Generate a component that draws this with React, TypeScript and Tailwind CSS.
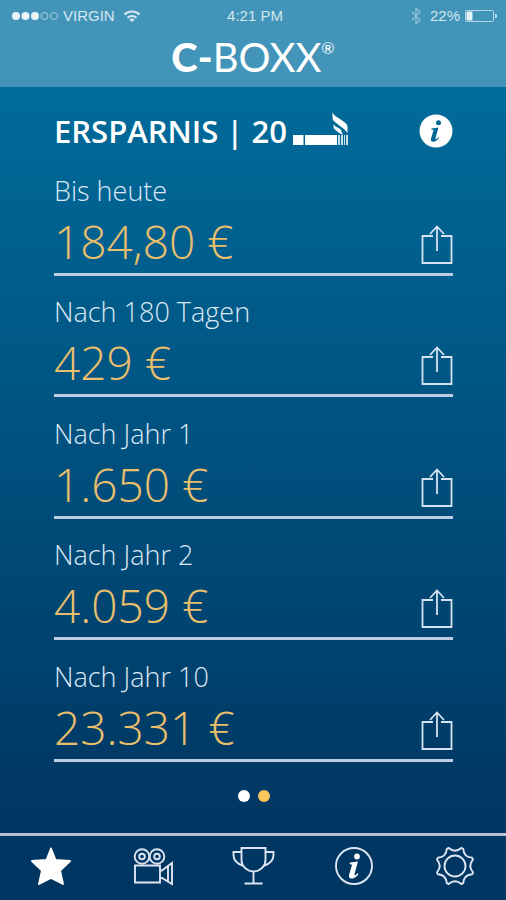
import type { ReactNode } from "react";

const savings = [
  { label: "Bis heute", amount: "184,80 €" },
  { label: "Nach 180 Tagen", amount: "429 €" },
  { label: "Nach Jahr 1", amount: "1.650 €" },
  { label: "Nach Jahr 2", amount: "4.059 €" },
  { label: "Nach Jahr 10", amount: "23.331 €" },
];

function StatusBar() {
  return (
    <div className="grid h-8 grid-cols-3 items-center pr-2 pl-3 font-['Liberation_Sans',sans-serif] text-[15px] text-[#d3e7f1]">
      <div className="flex items-center gap-1">
        <svg width="47" height="10" viewBox="0 0 47 10" aria-hidden="true">
          <g fill="#eaf4f9">
            <circle cx="4" cy="5" r="4" />
            <circle cx="13.500" cy="5" r="4" />
            <circle cx="23" cy="5" r="4" />
          </g>
          <g fill="none" stroke="#a9cfe0">
            <circle cx="32.500" cy="5" r="3.500" />
            <circle cx="42" cy="5" r="3.500" />
          </g>
        </svg>
        <span>VIRGIN</span>
        <svg width="18" height="14" viewBox="0 0 18 14" fill="none" stroke="currentColor" strokeWidth="2" className="ml-1" aria-hidden="true">
          <path d="M1.500 5.500a10.800 10.800 0 0 1 15 0" />
          <path d="M4.500 8.700a6.500 6.500 0 0 1 9 0" />
          <path d="M9 13 6.300 10.700a4 4 0 0 1 5.400 0Z" fill="currentColor" stroke="none" />
        </svg>
      </div>
      <span className="text-center">4:21 PM</span>
      <div className="flex items-center justify-end gap-1">
        <svg width="12" height="18" viewBox="0 0 12 18" fill="none" stroke="#8fc0d6" strokeWidth="1.300" className="mr-1" aria-hidden="true">
          <path d="M2 5l8 8-4 3.500v-15L10 5l-8 8" />
        </svg>
        <span>22%</span>
        <svg width="34" height="14" viewBox="0 0 34 14" aria-hidden="true">
          <rect x="1.500" y="1.500" width="28" height="11" rx="1" fill="none" stroke="#b5d6e5" />
          <path d="M2.500 2.500h6v9h-6z" fill="#e4f1f7" />
          <path d="M31 5c1.500 0 2 1 2 2s-.5 2-2 2z" fill="#d3e7f1" />
        </svg>
      </div>
    </div>
  );
}

function CigaretteIcon() {
  return (
    <svg width="56" height="38" viewBox="0 0 56 38" fill="#fff" aria-hidden="true">
      <path d="M0 23h10.500v10H0zM12 23h32v10H12z" />
      <path d="M45 23h2v10h-2zM48 23h2v10h-2zM51 23h1v10h-1zM53 23h2v10h-2z" opacity=".8" />
      <path d="M39.500 0c1 3 3 4 6 6l5 3.500c3 2 4 3.500 4 6V21l-3-3.500-7-5.500c-4-3-5-4-5-7Z" />
      <path d="M40.500 12c1 2 2 2.500 4 3.500 3 1.500 4 2.500 4 4.500l1.500 2.500c-2 0-3-1-5-2.500-3-2-4.500-3.500-4.500-5.500Z" />
    </svg>
  );
}

function ShareIcon() {
  return (
    <svg width="32" height="40" viewBox="0 0 32 40" fill="none" stroke="#d5e2f1" strokeWidth="1.800" aria-hidden="true">
      <path d="M12 11H1.500v27h29V11H20" />
      <path d="M16 26V1.500M9 9l7-7.500L23 9" />
    </svg>
  );
}

function NavButton({ label, children }: { label: string; children: ReactNode }) {
  return (
    <button type="button" aria-label={label} className="flex items-center justify-center">
      <svg width="44" height="44" viewBox="0 0 44 44" fill="none" stroke="#dde5f2" strokeWidth="1.900" aria-hidden="true">
        {children}
      </svg>
    </button>
  );
}

export default function App() {
  return (
    <div className="flex min-h-screen flex-col bg-linear-to-b from-[#0072a2] to-[#00315c] font-['Open_Sans',sans-serif] text-white">
      <header className="flex h-[87px] flex-col bg-[#4394b9]">
        <StatusBar />
        <h1 className="flex justify-center font-['Lato',sans-serif] text-[40px] leading-[50px]">
          <span className="font-black">C-</span>
          <span>BOXX</span>
          <sup className="top-0 pt-1 text-base leading-6">®</sup>
        </h1>
      </header>

      <main className="flex flex-1 flex-col pr-[53px] pl-[54px]">
        <div className="flex h-[67px] items-center justify-between pt-5">
          <h2 className="flex items-center gap-1.5 text-[31px] leading-10 font-semibold">
            ERSPARNIS | 20
            <CigaretteIcon />
          </h2>
          <button type="button" aria-label="Information">
            <svg width="34" height="34" viewBox="0 0 34 34" aria-hidden="true">
              <circle cx="17" cy="17" r="16.500" fill="#fff" />
              <g fill="#006696">
                <circle cx="19.500" cy="8.800" r="2.500" />
                <path d="m12.500 14.500 7-1-3 10.500c-.4 1.500.3 1.800 2.800-.8l.8.600c-2.500 3.500-4.500 4-6 4-2 0-2.700-1.300-2-3.500l2.500-8.300-2.300-.500Z" />
              </g>
            </svg>
          </button>
        </div>

        <ul className="grid flex-1 auto-rows-fr">
          {savings.map((item) => (
            <li key={item.label} className="flex items-end justify-between border-b-3 border-[#bccce2] pb-0.5">
              <div>
                <p className="text-[27px] leading-10 font-light text-[#dce8f4]">{item.label}</p>
                <p className="text-[46px] leading-[60px] font-light text-[#eabf6b]">{item.amount}</p>
              </div>
              <button type="button" aria-label={`${item.label} teilen`} className="mb-1.5">
                <ShareIcon />
              </button>
            </li>
          ))}
        </ul>

        <div className="flex h-[71px] justify-center gap-2 pt-7">
          <button type="button" aria-label="Seite 1" className="size-3 rounded-full bg-white" />
          <button type="button" aria-label="Seite 2" className="size-3 rounded-full bg-[#fcc55c]" />
        </div>
      </main>

      <nav className="grid h-[67px] grid-cols-5 border-t-3 border-[#b9bfd6] bg-[#003762] pb-1">
        <NavButton label="Ersparnis">
          <path
            d="m22 4.500 4.500 11.500 14.500 1-10 9.500 3 13.500-12-6-12 6 3-13.500L3 17l14.500-1Z"
            fill="#fff"
            stroke="#fff"
            strokeLinejoin="round"
          />
        </NavButton>
        <NavButton label="Videos">
          <circle cx="12" cy="12.500" r="7.300" />
          <circle cx="12" cy="12.500" r="2.800" />
          <circle cx="27" cy="12.500" r="7.300" />
          <circle cx="27" cy="12.500" r="2.800" />
          <path d="M5 21.500h25v17H5zM30 26.500l2 0 10-7.500v21l-10-6h-2M38 22v15" />
        </NavButton>
        <NavButton label="Erfolge">
          <path d="M10.500 4h24v12c0 6-5 11-12 11.500-7-.5-12-5.500-12-11.500ZM10.500 8h-8v3c0 6 4 9 10 11M34.500 8h8v3c0 6-4 9-10 11M22.500 27.500v12M13.500 39.500h18" />
        </NavButton>
        <NavButton label="Information">
          <circle cx="22" cy="22" r="18" />
          <g fill="#fff" stroke="none">
            <circle cx="25" cy="12.500" r="2.900" />
            <path d="m18 18.500 8-1-3.500 12.500c-.4 1.700.4 2 3-.8l1 .7c-2.500 3.700-5 4.600-7 4.600-2.200 0-3-1.500-2.300-4l2.800-9.800-2.500-.7Z" />
          </g>
        </NavButton>
        <NavButton label="Einstellungen">
          <circle cx="22" cy="22" r="10.500" />
          <path
            d="M15.700 4Q22 9.500 28.300 4L30.200 4.800Q30.800 13.200 39.200 13.800L40 15.700Q34.500 22 40 28.300L39.200 30.200Q30.800 30.800 30.200 39.200L28.300 40Q22 34.500 15.700 40L13.800 39.200Q13.200 30.800 4.800 30.200L4 28.300Q9.500 22 4 15.700L4.800 13.800Q13.200 13.200 13.800 4.800Z"
            strokeLinejoin="round"
          />
        </NavButton>
      </nav>
    </div>
  );
}
